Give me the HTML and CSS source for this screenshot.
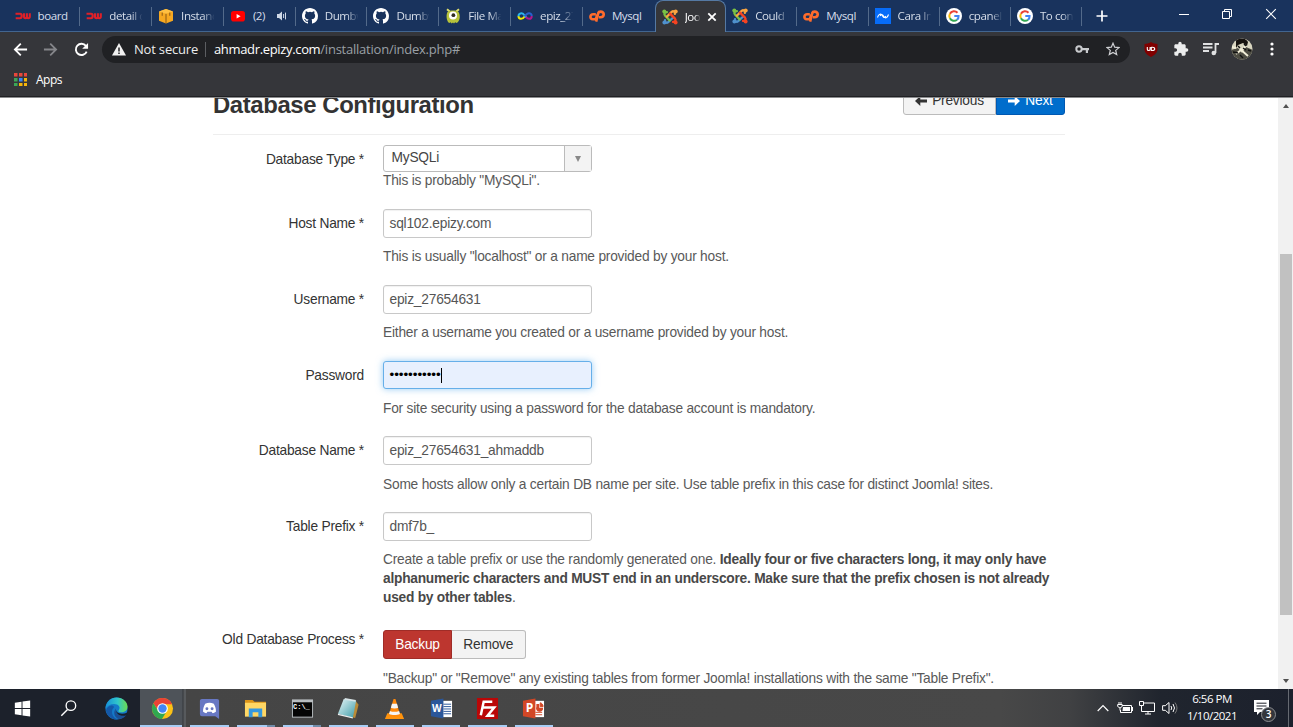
FILE: index.html
```html
<!DOCTYPE html>
<html lang="en">
<head>
<meta charset="utf-8">
<title>Joomla! Web Installer</title>
<link rel="stylesheet" href="styles.css">
</head>
<body>
<svg class="defs" aria-hidden="true">
  <symbol id="du" viewBox="0 0 16 16"><path d="M.5 5.800h4.500c1.400 0 1.700.8 1.700 2.200 0 1.500-.5 2.200-1.800 2.200H.7M9 5.200V8.500c0 1.200.4 1.700 1.400 1.700s1.500-.6 1.500-1.700V5.200M11.900 8.500c0 1.200.4 1.700 1.300 1.700 1.100 0 1.600-.6 1.600-1.700V5.200" fill="none" stroke="#e02028" stroke-width="2.100"/></symbol>
  <symbol id="aws" viewBox="0 0 16 16"><path d="M1 3.500 8 1l7 2.500v9.200L8 15.400l-7-2.700z" fill="#f6a821"/><path d="m1 3.500 7 2.300 7-2.300L8 1z" fill="#ffc043"/><path d="M8 5.800v9.600M4.200 4.500v3.300M11.800 4.500v3.300" stroke="#704515" stroke-width=".8"/></symbol>
  <symbol id="yt" viewBox="0 0 16 16"><rect x="1" y="3" width="14" height="10.500" rx="2.800" fill="#f00"/><path d="m6.600 6 4 2.300-4 2.300z" fill="#fff"/></symbol>
  <symbol id="gh" viewBox="0 0 16 16"><path fill="#fff" d="M8 0C3.580 0 0 3.580 0 8c0 3.540 2.290 6.530 5.470 7.590.4.070.55-.17.55-.38 0-.19-.01-.82-.01-1.490-2.010.37-2.530-.49-2.690-.94-.09-.23-.48-.94-.82-1.130-.28-.15-.68-.52-.01-.53.63-.01 1.080.58 1.230.82.72 1.210 1.870.87 2.330.66.070-.52.28-.87.51-1.070-1.780-.2-3.640-.89-3.640-3.950 0-.87.31-1.590.82-2.150-.08-.2-.36-1.020.08-2.120 0 0 .67-.21 2.200.82a7.600 7.600 0 0 1 4 0c1.530-1.040 2.200-.82 2.200-.82.44 1.100.16 1.920.08 2.120.51.56.82 1.270.82 2.150 0 3.070-1.870 3.750-3.650 3.950.29.25.54.73.54 1.480 0 1.070-.01 1.930-.01 2.200 0 .21.15.46.55.38A8 8 0 0 0 16 8c0-4.420-3.580-8-8-8"/></symbol>
  <symbol id="monsta" viewBox="0 0 16 16"><path d="M2 1.200 4.800 3.500 M14 1.200 11.200 3.500" stroke="#dfe070" stroke-width="2"/><path d="M2.500 4C4 2 12 2 13.500 4c2 3 1.500 8-.5 10l-1.300 1-1.500-.8-1.200 1.300L8 14.500l-1.400 1-1-1.200-1.400.8C1.500 13 .8 7 2.500 4z" fill="#b6c23b"/><circle cx="8" cy="7.500" r="4" fill="#fff"/><circle cx="8.400" cy="7.200" r="1.900" fill="#302d21"/></symbol>
  <symbol id="inf" viewBox="0 0 16 16"><g fill="none" stroke-width="2"><path d="M7.600 8.500C5.500 11.800 1.500 11.500 1.500 8" stroke="#f5e900"/><path d="M1.500 8.200C1.500 5 5 4.300 7.400 7.200" stroke="#28b5ef"/><path d="m7.300 7.100 2 2.400" stroke="#30c7ee"/><path d="M7.700 8.300C11 3.300 14.700 5.200 14.700 8" stroke="#2860ce"/><path d="M14.700 7.900c0 4-4 3.500-5.800 1" stroke="#b3188d"/></g></symbol>
  <symbol id="cp" viewBox="0 0 16 16"><g fill="none" stroke="#ff6c2c" stroke-width="2.600"><path d="M6.800 6.200H4.200C.8 6.200.4 11.200 3.700 11.200h2C7.400 11.200 7.600 8.600 8.200 6.500"/><path d="m7.100 13.600 2.200-8.600c.4-1.300 1-1.400 2.200-1.400 4.400 0 4.100 5.300.2 5.700H9.900"/></g></symbol>
  <symbol id="joomla" viewBox="0 0 16 16"><g fill="none" stroke-width="2.300" stroke-linecap="round"><path d="m11.200 8.500-5 4.700c-1.600 1.300-3.400.2-3.200-2" stroke="#4f91cd"/><path d="M7.800 11.500 3 6.500c-1.400-1.800-.2-3.500 1.900-3.400" stroke="#7ac143"/><path d="m4.800 7.700 4.900-4.800c1.700-1.400 3.500-.1 3.200 2" stroke="#f9a541"/><path d="m8 4.600 5 5c1.300 1.700.2 3.500-2 3.200" stroke="#f44321"/></g><circle cx="2.300" cy="2.600" r="2" fill="#7ac143"/><circle cx="13.700" cy="2.500" r="2" fill="#f9a541"/><circle cx="13.600" cy="13.500" r="2" fill="#f44321"/><circle cx="2.400" cy="13.500" r="2" fill="#4f91cd"/></symbol>
  <symbol id="cara" viewBox="0 0 16 16"><path d="M0 0h16v16H0z" fill="#076cf8"/><path d="M2.500 9.500c1-3 2.800-4.500 4.300-2.500l1.400 1.800c1.200 1.400 2 .6 2.600-.8M5.200 8c.6-1.400 1.400-2.200 2.600-.8L9.200 9c1.500 2 3.300.5 4.300-2.500" fill="none" stroke="#fff" stroke-width="1.100"/></symbol>
  <symbol id="goog" viewBox="0 0 16 16"><circle cx="8" cy="8" r="8" fill="#fff"/><g fill="none" stroke-width="2"><path d="M11.500 4.700A4.700 4.700 0 0 0 3.900 5.800" stroke="#ea4335"/><path d="M3.900 5.800a4.700 4.700 0 0 0 0 4.500" stroke="#fbbc05"/><path d="M3.900 10.300a4.700 4.700 0 0 0 7.100 1.400" stroke="#34a853"/><path d="M11 11.700c1.200-1 1.700-2.400 1.600-3.700H8.300" stroke="#4285f4"/></g></symbol>
</svg>

<header class="tabs">
  <div class="tab"><svg><use href="#du"/></svg><span class="whole">board</span></div>
  <div class="tab"><svg><use href="#du"/></svg><span>detail c</span></div>
  <div class="tab"><svg><use href="#aws"/></svg><span>Instanc</span></div>
  <div class="tab"><svg><use href="#yt"/></svg><span class="count">(2)</span><svg class="sound" viewBox="0 0 12 12"><path d="M1 4h2l3-2.500v9L3 8H1z" fill="#cfd9e7"/><path d="M7.600 4v4M9.500 2.600v6.800" stroke="#cfd9e7" stroke-width="1"/></svg></div>
  <div class="tab"><svg><use href="#gh"/></svg><span>Dumbw</span></div>
  <div class="tab"><svg><use href="#gh"/></svg><span>Dumbw</span></div>
  <div class="tab"><svg><use href="#monsta"/></svg><span>File Ma</span></div>
  <div class="tab"><svg><use href="#inf"/></svg><span>epiz_27</span></div>
  <div class="tab last"><svg><use href="#cp"/></svg><span class="whole">Mysql</span></div>
  <div class="tab active"><svg><use href="#joomla"/></svg><span>Joo</span><svg class="close" viewBox="0 0 10 10"><path d="m1.300 1.300 7.400 7.400m0-7.400L1.300 8.700" stroke="#fff" stroke-width="1.800"/></svg></div>
  <div class="tab"><svg><use href="#joomla"/></svg><span>Could n</span></div>
  <div class="tab"><svg><use href="#cp"/></svg><span class="whole">Mysql</span></div>
  <div class="tab"><svg><use href="#cara"/></svg><span>Cara In</span></div>
  <div class="tab"><svg><use href="#goog"/></svg><span>cpanel</span></div>
  <div class="tab"><svg><use href="#goog"/></svg><span>To con</span></div>
  <svg class="plus" viewBox="0 0 12 12"><path d="M6 .5v11M.5 6h11" stroke="#fff" stroke-width="1.700"/></svg>
  <div class="window-buttons">
    <svg viewBox="0 0 12 12"><path d="M1 6.500h10" stroke="#fff"/></svg>
    <svg viewBox="0 0 12 12"><path d="M1.500 3.500h7v7h-7zM3.500 3.500v-2h7v7h-2" fill="none" stroke="#fff"/></svg>
    <svg viewBox="0 0 12 12"><path d="m1.200 1.200 9.600 9.600m0-9.600-9.600 9.600" stroke="#fff" stroke-width="1.100"/></svg>
  </div>
</header>

<nav class="toolbar">
  <svg class="nav back" viewBox="0 0 16 16"><path d="M15 8H2M8.300 1.700 2 8l6.300 6.300" fill="none" stroke="#fff" stroke-width="1.900"/></svg>
  <svg class="nav forward" viewBox="0 0 16 16"><path d="M1 8h13M7.700 1.700 14 8l-6.300 6.300" fill="none" stroke="#85868a" stroke-width="1.900"/></svg>
  <svg class="nav reload" viewBox="0 0 16 16"><path d="M13.500 10.200A6 6 0 1 1 12.700 4.200L14 5.600" fill="none" stroke="#fff" stroke-width="2"/><path d="M15 1v6.300H8.700z" fill="#fff"/></svg>
  <div class="omnibox">
    <svg class="warn" viewBox="0 0 14 13"><path d="M7 0 14 12.500H0z" fill="#f1f1f1"/><path d="M7 4.500v4M7 9.500V11" stroke="#202124" stroke-width="1.500"/></svg>
    <span class="insecure">Not secure</span><i></i>
    <span class="url"><b>ahmadr.epizy.com</b>/installation/index.php#</span>
    <svg class="key" viewBox="0 0 14 10"><circle cx="4" cy="5" r="2.700" fill="none" stroke="#c8cacd" stroke-width="2"/><path d="M6.500 4H14v2.200h-1V9h-2.200V6.200H6.500z" fill="#c8cacd"/></svg>
    <svg class="star" viewBox="0 0 14 14"><path d="m7 1.200 1.700 4 4.300.4-3.300 2.800 1 4.200L7 10.400l-3.700 2.200 1-4.200L1 5.600l4.300-.4z" fill="none" stroke="#cfd0d3" stroke-width="1.200"/></svg>
  </div>
  <svg class="ext shield" viewBox="0 0 14 15"><path d="M7 0c2.400 1.500 4.600 1.900 6.500 2v5c0 4-3 6.300-6.500 8C3.500 13.300.5 11 .5 7V2C2.400 1.900 4.600 1.500 7 0z" fill="#800000"/><path d="M3.300 5v2.200c0 1.800 2.800 1.800 2.800 0V5M7.300 5v3.500h1c3.200 0 3.200-3.200 0-3.200h-1" fill="none" stroke="#fff" stroke-width="1.100"/></svg>
  <svg class="ext puzzle" viewBox="0 0 24 24"><path d="M20.500 11H19V7c0-1.100-.9-2-2-2h-4V3.500a2.500 2.500 0 0 0-5 0V5H4c-1.100 0-2 .9-2 2v3.800h1.500a2.700 2.700 0 0 1 0 5.400H2V20c0 1.100.9 2 2 2h3.800v-1.500a2.700 2.700 0 0 1 5.400 0V22H17c1.100 0 2-.9 2-2v-4h1.500a2.500 2.500 0 0 0 0-5z" fill="#eceded"/></svg>
  <svg class="ext queue" viewBox="0 0 16 14"><path d="M0 2h9.500M0 5.500h9.500M0 9h6M12.500 11V2H16" fill="none" stroke="#e0e1e2" stroke-width="1.800"/><circle cx="10.800" cy="11" r="2.300" fill="#e0e1e2"/></svg>
  <svg class="ext avatar" viewBox="0 0 22 22"><defs><clipPath id="face"><circle cx="11" cy="11" r="10.500"/></clipPath></defs><g clip-path="url(#face)"><path d="M0 0h22v22H0z" fill="#d8d5bf"/><path d="M0 12 7 10l4 5 4-6 7 3v10H0z" fill="#4d4c42"/><path d="M5 2c4-3 10-2 12 2l-1 4-4-3-5 2-2 3z" fill="#17130f"/><path d="m5 16 10-8M9 11l8 7M1 9l4 1" stroke="#f2eed8" stroke-width="1.900"/><path d="m2 14 5 1m5-5 3 2m-6 5 3 3M7 8l2 2M13 6l2 2M17 12l3 1" stroke="#111" stroke-width="1.400"/></g></svg>
  <svg class="ext more" viewBox="0 0 4 14"><g fill="#fff"><circle cx="2" cy="2" r="1.600"/><circle cx="2" cy="7" r="1.600"/><circle cx="2" cy="12" r="1.600"/></g></svg>
</nav>
<div class="bookmarks">
  <svg viewBox="0 0 13 13"><g fill="#e8473b"><path d="M0 0h3.500v3.500H0zM5 0h3.500v3.500H5zM10 0h3v3.500h-3z"/></g><path d="M0 5h3.500v3.500H0zM0 10h3.500v3H0z" fill="#3ba757"/><path d="M5 5h3.500v3.500H5z" fill="#3b86f6"/><path d="M10 5h3v3.500h-3zM5 10h3.500v3H5zM10 10h3v3h-3z" fill="#f5b50a"/></svg>
  <span>Apps</span>
</div>

<div class="viewport">
  <main>
    <div class="page-head">
      <h3>Database Configuration</h3>
      <div class="pager">
        <button class="btn"><svg viewBox="0 0 12 10"><path d="M0 5 5.300 0v3.500H12v3H5.300V10z" fill="#333"/></svg>Previous</button><button class="btn primary"><svg viewBox="0 0 12 10"><path d="M12 5 6.700 0v3.500H0v3h6.700V10z" fill="#fff"/></svg>Next</button>
      </div>
    </div>
    <form>
      <div class="row first"><label>Database Type *</label><div class="controls">
        <div class="select"><span>MySQLi</span><i></i></div>
        <p>This is probably "MySQLi".</p></div></div>
      <div class="row"><label>Host Name *</label><div class="controls"><div class="input">sql102.epizy.com</div><p>This is usually "localhost" or a name provided by your host.</p></div></div>
      <div class="row"><label>Username *</label><div class="controls"><div class="input">epiz_27654631</div><p>Either a username you created or a username provided by your host.</p></div></div>
      <div class="row"><label>Password</label><div class="controls"><div class="input focus"><span class="dots">•••••••••••</span><i class="caret"></i></div><p>For site security using a password for the database account is mandatory.</p></div></div>
      <div class="row"><label>Database Name *</label><div class="controls"><div class="input">epiz_27654631_ahmaddb</div><p>Some hosts allow only a certain DB name per site. Use table prefix in this case for distinct Joomla! sites.</p></div></div>
      <div class="row"><label>Table Prefix *</label><div class="controls"><div class="input">dmf7b_</div><p>Create a table prefix or use the randomly generated one. <strong>Ideally four or five characters long, it may only have alphanumeric characters and MUST end in an underscore. Make sure that the prefix chosen is not already used by other tables</strong>.</p></div></div>
      <div class="row"><label>Old Database Process *</label><div class="controls"><div class="choice"><button type="button" class="btn danger">Backup</button><button type="button" class="btn">Remove</button></div><p>"Backup" or "Remove" any existing tables from former Joomla! installations with the same "Table Prefix".</p></div></div>
    </form>
  </main>
  <div class="scrollbar"><i class="up"></i><div class="thumb"></div><i class="down"></i></div>
</div>

<footer class="taskbar">
  <div class="task"><svg viewBox="0 0 24 24"><path d="m4 6 7-1v6.500H4zM12 4.800 20 3.700v7.800h-8zM4 12.500h7V19l-7-1zM12 12.500h8v7.800l-8-1.100z" fill="#fff"/></svg></div>
  <div class="task"><svg viewBox="0 0 24 24"><circle cx="14.500" cy="9" r="5" fill="none" stroke="#fff" stroke-width="1.400"/><path d="m11 13-6.500 6.500" stroke="#fff" stroke-width="1.500"/></svg></div>
  <div class="task edge"><svg viewBox="0 0 24 24"><defs><linearGradient id="sea" x1="0" x2="1"><stop stop-color="#168fd8"/><stop offset=".55" stop-color="#30c6cb"/><stop offset="1" stop-color="#6bdc50"/></linearGradient></defs><circle cx="12" cy="12" r="11.500" fill="#147ac9"/><path d="M.5 12C1 5 6 .5 12 .5c7 0 11.500 5 11.500 9.500 0 5-4 6.200-7 6-3-.3-2.800-1.500-2-2.500 2-3-.5-6.200-5-6.200-4 0-7 2-9 4.700z" fill="url(#sea)"/><path d="M9.500 10.500C5 15 8 22.500 14 23.400 8 24.300 2 20 1 14c1-4 6-7 8.500-3.500z" fill="#1458a7"/><path d="M11.500 12c-1.500 4 2 7.500 6 7.300 2-.1 3.700-.9 5-2.300l.8.500C21 21 18 23 14.500 23.300 9 21 8.500 15 11.500 12z" fill="#1b4f94"/><path d="M11.500 12c-.8 4 4 7 11.500 4.500l1 1.500-3 1.500c-6 1-10.500-2.500-9.500-7.500z" fill="#171f2c"/></svg></div>
  <div class="task open current"><svg viewBox="0 0 24 24"><circle cx="12" cy="12" r="11" fill="#fbc116"/><path d="M2.500 6.500A11 11 0 0 1 22 7.500H12L7.500 14z" fill="#e94235"/><path d="M2.500 6.500a11 11 0 0 0 9 16.500L16.500 14.500H7.700z" fill="#30a850"/><circle cx="12" cy="12" r="5.600" fill="#fff"/><circle cx="12" cy="12" r="4.400" fill="#4385f5"/></svg></div>
  <div class="task open"><svg viewBox="0 0 24 24"><path d="M4 2h16a2 2 0 0 1 2 2v19l-4-3H4a2 2 0 0 1-2-2V4c0-1 1-2 2-2z" fill="#6878c3"/><path d="M7.500 7c3-1.200 6-1.200 9 0 1.500 2.600 2.500 5.400 2.200 8.500-1.600 1.200-2.900 1.500-3.700 1.300l-.8-1.300H9.800L9 16.800c-.8.2-2.100-.1-3.700-1.300C5 12.400 6 9.600 7.500 7z" fill="#fff"/><circle cx="9.300" cy="12.200" r="1.500" fill="#6878c3"/><circle cx="14.700" cy="12.200" r="1.500" fill="#6878c3"/></svg></div>
  <div class="task open grouped"><svg viewBox="0 0 24 24"><path d="M1 3h8l2 2h12v4H1z" fill="#dc9518"/><path d="M1 6h22v14.500H1z" fill="#ffd764"/><path d="M5 12h14v9h-4v-5H9v5H5z" fill="#3598df"/></svg></div>
  <div class="task open grouped"><svg viewBox="0 0 24 24"><path d="M1 2.500h22v19H1z" fill="#b8bdc0"/><path d="M2 5.500h20V20.500H2z" fill="#050505"/></svg><span class="prompt">C:\_</span></div>
  <div class="task open"><svg viewBox="0 0 24 24"><defs><linearGradient id="pad" x1="0" y1="0" x2="1" y2="1"><stop stop-color="#e8f7f8"/><stop offset="1" stop-color="#3b9aa6"/></linearGradient></defs><path d="M19 3.500 22.500 8 19 22l-3-1z" fill="#b98a36"/><path d="m7 2 13 2-3.500 18L1 17.500z" fill="url(#pad)"/><path d="m1 17.500 15.500 3.500v1.500L1 18.700z" fill="#eee"/><path d="m8 2 11.500 2" stroke="#d8e4e7" stroke-width="2"/></svg></div>
  <div class="task open"><svg viewBox="0 0 24 24"><path d="M4.500 17h15l2.500 6H2z" fill="#ff930d"/><path d="M11 2h2l5 17c-3 2-9 2-12 0z" fill="#ff890b"/><path d="M9.400 7h5.200l1.200 4.200c-2 1-5.600 1-7.600 0zM7.200 14.500c3 1.300 6.600 1.300 9.600 0l.9 3.200c-3 1.500-8.400 1.500-11.400 0z" fill="#f5f5f5"/></svg></div>
  <div class="task open"><svg viewBox="0 0 24 24"><path d="M12 4h11v17H12z" fill="#fff"/><path d="M14 7.500h8M14 10h8M14 12.500h8M14 15h8M14 17.500h8" stroke="#2b579a"/><path d="m1 4 13-2.500v21L1 20z" fill="#2b579a"/></svg><span class="letter">W</span></div>
  <div class="task open"><svg viewBox="0 0 24 24"><path d="M1 1h22v22H1z" fill="#ba0707"/><path d="M5 19 8 5h9M6.500 11h6M12 11h7l-7 8.500h7" fill="none" stroke="#fff" stroke-width="2.600"/></svg></div>
  <div class="task open"><svg viewBox="0 0 24 24"><path d="M12 4h11v17H12z" fill="#fff"/><path d="M15 7.200h3v4h4a3.700 3.700 0 1 1-7-1z" fill="#d24726"/><path d="M19 6v4h3c0-2-1-3.500-3-4zM14 16h7M14 18.500h7" fill="#d24726" stroke="#d24726"/><path d="m1 4 13-2.500v21L1 20z" fill="#d24726"/></svg><span class="letter p">P</span></div>
  <div class="tray">
    <svg class="chev" viewBox="0 0 12 8"><path d="m.7 7 5.300-5.300L11.300 7" fill="none" stroke="#fff" stroke-width="1.200"/></svg>
    <svg class="battery" viewBox="0 0 16 12"><path d="M5 3.500h9.500v7H3.500V8" fill="none" stroke="#fff"/><path d="M6 5h7v4H5.500zM15 5h1v4h-1z" fill="#fff"/><path d="M.7 2.500h4.500v2L3 6 .7 4.500zM2 0v3M4 0v3M3 6v2.500" fill="none" stroke="#fff"/></svg>
    <svg class="net" viewBox="0 0 16 14"><path d="M5 2h10.500v8.500h-13V6M9 10.500V13M6 13h6M.5.500h4v4h-4zM2.500 4.500v5" fill="none" stroke="#fff"/></svg>
    <svg class="vol" viewBox="0 0 16 14"><path d="M.6 4.700h2.700L7 1.500v11L3.300 9.300H.6zM9 5q1.500 2 0 4M11 3q3 4 0 8" fill="none" stroke="#fff"/><path d="M13 1.500q4 5.500 0 11" fill="none" stroke="#777"/></svg>
    <div class="clock"><span>6:56 PM</span><span>1/10/2021</span></div>
    <div class="notice"><svg viewBox="0 0 16 16"><path d="M0 0h15v12H6l-3 3v-3H0z" fill="#fff"/><path d="M2.500 3.200h10M2.500 6h10M2.500 8.800h6" stroke="#20232c"/></svg><b>3</b></div>
    <i class="peek"></i>
  </div>
</footer>
</body>
</html>
```

FILE: styles.css
```css
* { box-sizing: border-box; }
body { margin: 0; width: 1293px; height: 727px; overflow: hidden; display: flex; flex-direction: column; background: #fff; font-family: "Open Sans", "Noto Sans", sans-serif; }
svg { display: block; flex: none; }
.defs { position: absolute; width: 0; height: 0; }

.tabs { height: 32px; flex: none; display: flex; align-items: stretch; padding-left: 8.5px; background: #19335d; border-bottom: 1px solid #42658f; color: #d6deea; font-size: 11.6px; letter-spacing: -0.45px; }
.tab { width: 71.8px; flex: none; display: flex; align-items: center; padding-left: 6px; position: relative; }
.tab::after { content: ""; position: absolute; right: 0; top: 7px; height: 19px; width: 1px; background: #536a8a; }
.tab.last::after, .tab.active::after { display: none; }
.tab.active ~ .tab { width: 71.2px; }
.tab > svg { width: 16px; height: 16px; }
.tab span { width: 35px; margin-left: 7px; overflow: hidden; white-space: nowrap; -webkit-mask-image: linear-gradient(90deg, #000 62%, transparent 96%); mask-image: linear-gradient(90deg, #000 62%, transparent 96%); }
.tab span.whole { -webkit-mask-image: none; mask-image: none; }
.tab span.count { width: 16px; -webkit-mask-image: none; mask-image: none; }
.tab .sound { width: 12px; height: 12px; margin-left: 7px; }
.tab.active { width: 71.5px; height: 32px; background: #35363a; border: 1px solid #5579a3; border-bottom: 0; border-radius: 8px 8px 0 0; color: #fff; }
.tab.active span { width: 16px; }
.tab.active .close { width: 10px; height: 10px; margin-left: 6px; }
.plus { width: 12px; height: 12px; margin: 10px 0 0 14px; }
.window-buttons { margin-left: auto; width: 131px; display: flex; justify-content: space-around; align-items: center; padding-bottom: 4px; }
.window-buttons svg { width: 12px; height: 12px; }

.toolbar { height: 33px; flex: none; display: flex; align-items: center; padding: 1px 0 0 13px; background: #35363a; }
.nav { width: 15px; height: 15px; margin-right: 15.4px; }
.reload { margin-right: 14.2px; }
.omnibox { width: 1028px; height: 27px; border-radius: 14px; background: #202124; display: flex; align-items: center; padding: 0 10px; color: #9aa0a6; font-size: 13px; margin-left: -1px; white-space: nowrap; }
.warn { width: 14px; height: 13px; margin-right: 8px; }
.insecure { color: #eceded; width: 64px; letter-spacing: -0.18px; }
.omnibox i { width: 1px; height: 15px; background: #5c5e62; margin: 0 8px 0 7px; }
.url { letter-spacing: -0.23px; }
.url b { font-weight: 400; color: #fff; letter-spacing: -0.34px; }
.key { width: 14px; height: 10px; margin-left: auto; margin-right: 17px; }
.star { width: 14px; height: 14px; }
.ext { margin-left: 14px; }
.shield { width: 14px; height: 15px; }
.puzzle { width: 16px; height: 16px; margin-left: 15px; }
.queue { width: 16px; height: 14px; margin-left: 14px; }
.avatar { width: 22px; height: 22px; margin-left: 12px; }
.more { width: 4px; height: 14px; margin-left: 17px; }
.bookmarks { height: 32px; flex: none; display: flex; align-items: center; gap: 9px; padding: 0 0 3px 14px; background: #35363a; border-bottom: 1px solid #202124; color: #fff; font-size: 12px; letter-spacing: -0.5px; }
.bookmarks svg { width: 13px; height: 13px; }

.viewport { height: 592px; flex: none; display: flex; overflow: hidden; background: #fff; border-top: 1px solid #8b8c8e; font-family: "Liberation Sans", Arial, sans-serif; font-size: 13.75px; line-height: 18.75px; letter-spacing: -0.22px; }
main { width: 852px; margin-left: 213px; height: 592px; overflow: visible; }
.page-head { display: flex; justify-content: space-between; height: 36.5px; border-bottom: 1px solid #eee; }
h3 { margin: -7px 0 0; font-size: 23.9px; line-height: 28px; letter-spacing: -0.4px; color: #333; white-space: nowrap; }
.pager { display: flex; margin-top: -12px; height: 29px; }
.btn { height: 29px; padding: 1px 11px 0; display: flex; align-items: center; justify-content: center; border: 1px solid #bbb; border-radius: 3px; background: #f3f3f3; color: #333; font: inherit; letter-spacing: inherit; }
.btn svg { width: 12px; height: 10px; margin-right: 5px; }
.pager .btn { width: 93px; border-radius: 3px 0 0 3px; padding: 1px 0 0; }
.pager .btn.primary { width: 69px; background: #006dcc; border-color: #0058b2; color: #fff; border-radius: 0 3px 3px 0; }
form { padding-top: 10.8px; }
.row { display: flex; margin-bottom: 17.8px; }
.row.first { margin-bottom: 18.1px; }
label { width: 151px; flex: none; padding-top: 6px; text-align: right; color: #333; }
.controls { margin-left: 19px; width: 682px; }
.controls p { margin: 10.6px 0 0; color: #595959; }
.controls strong { color: #484848; letter-spacing: -0.24px; }
.first .controls p { margin: 0.6px 0 0; }
.select { width: 208.5px; height: 26.5px; display: flex; border: 1px solid #bbb; border-radius: 3px; color: #444; line-height: 24px; }
.select span { flex: 1; padding-left: 7.5px; }
.select i { width: 27px; border-left: 1px solid #bbb; background: #f3f3f3; display: grid; place-items: center; }
.select i::after { content: ""; border: 3.5px solid transparent; border-top: 6px solid #888; border-bottom: 0; }
.input { width: 208.5px; height: 28.6px; border: 1px solid #c8c8c8; border-radius: 3px; padding: 1.4px 5.5px 0; color: #555; display: flex; align-items: center; box-shadow: inset 0 1px 1px rgba(0,0,0,.06); }
.input.focus { background: #e8f0fe; border-color: #66afe9; box-shadow: 0 0 7px rgba(82,168,236,.6); color: #000; padding-top: 0; }
.dots { font-size: 13.5px; letter-spacing: -0.08px; }
.caret { width: 1px; height: 15px; background: #000; }
.choice { display: flex; padding-top: 4.8px; }
.choice .btn { width: 73.5px; border-radius: 0 3px 3px 0; border-left: 0; }
.choice .btn.danger { width: 69px; background: #bd362f; border: 1px solid #9f2c27; color: #fff; border-radius: 3px 0 0 3px; }
.scrollbar { width: 15px; margin-left: auto; background: #f1f1f1; display: flex; flex-direction: column; align-items: center; padding: 6px 0; }
.thumb { width: 12px; height: 361px; flex: none; margin-top: 146px; background: #c1c1c1; }
.up { border: 3.5px solid transparent; border-bottom: 4px solid #505050; border-top: 0; }
.down { margin-top: auto; border: 3.5px solid transparent; border-top: 4px solid #505050; border-bottom: 0; }

.taskbar { height: 38px; flex: none; display: flex; color: #fff; background: linear-gradient(90deg, #1c212b 0, #1c212b 140px, #454545 186px, #484848 1000px, #404143 1070px, #20252e 1160px, #1c212d 1293px); }
.task { width: 46.35px; flex: none; display: grid; place-items: center; position: relative; }
.task:first-child { width: 45px; }
.task svg { width: 23px; height: 23px; }
.task.edge { width: 48.65px; }
.task.edge svg { margin-left: 2px; }
.task.open::after { content: ""; position: absolute; left: 4px; right: 4px; bottom: 0; height: 2px; background: #a8cdf5; }
.task.grouped::after { background: linear-gradient(90deg, #a8cdf5 78%, #718ba8 78%); }
.task.current { background: linear-gradient(90deg, #4e5359 0, #4e5359 42px, #34373b 43px, #575a5d 44px); padding-right: 1px; }
.task.current::after { left: 0; right: 4px; }
.letter { position: absolute; left: 14px; top: 12px; font: bold 10px/14px "Open Sans", sans-serif; }
.letter.p { left: 15px; font-size: 12px; }
.prompt { position: absolute; left: 14px; top: 13px; font: bold 7px/10px "Liberation Mono", monospace; }
.tray { margin-left: auto; width: 197px; display: flex; align-items: center; }
.chev { width: 12px; height: 8px; margin: 0 8px 0 1px; }
.battery { width: 16px; height: 12px; margin-right: 6px; }
.net { width: 16px; height: 14px; margin-right: 7px; }
.vol { width: 16px; height: 14px; }
.clock { width: 56px; margin-left: 6px; display: flex; flex-direction: column; align-items: center; font-size: 11.5px; line-height: 17px; letter-spacing: -0.5px; margin-top: -2px; white-space: nowrap; }
.notice { position: relative; margin-left: 14px; }
.notice svg { width: 16px; height: 16px; }
.notice b { position: absolute; left: 7px; top: 7px; width: 15px; height: 15px; border: 1px solid #8b8d91; border-radius: 50%; background: #33363c; font-size: 10px; font-weight: 600; line-height: 13px; text-align: center; }
.peek { width: 1px; height: 38px; margin-left: auto; margin-right: 4px; background: #666a72; }
```
